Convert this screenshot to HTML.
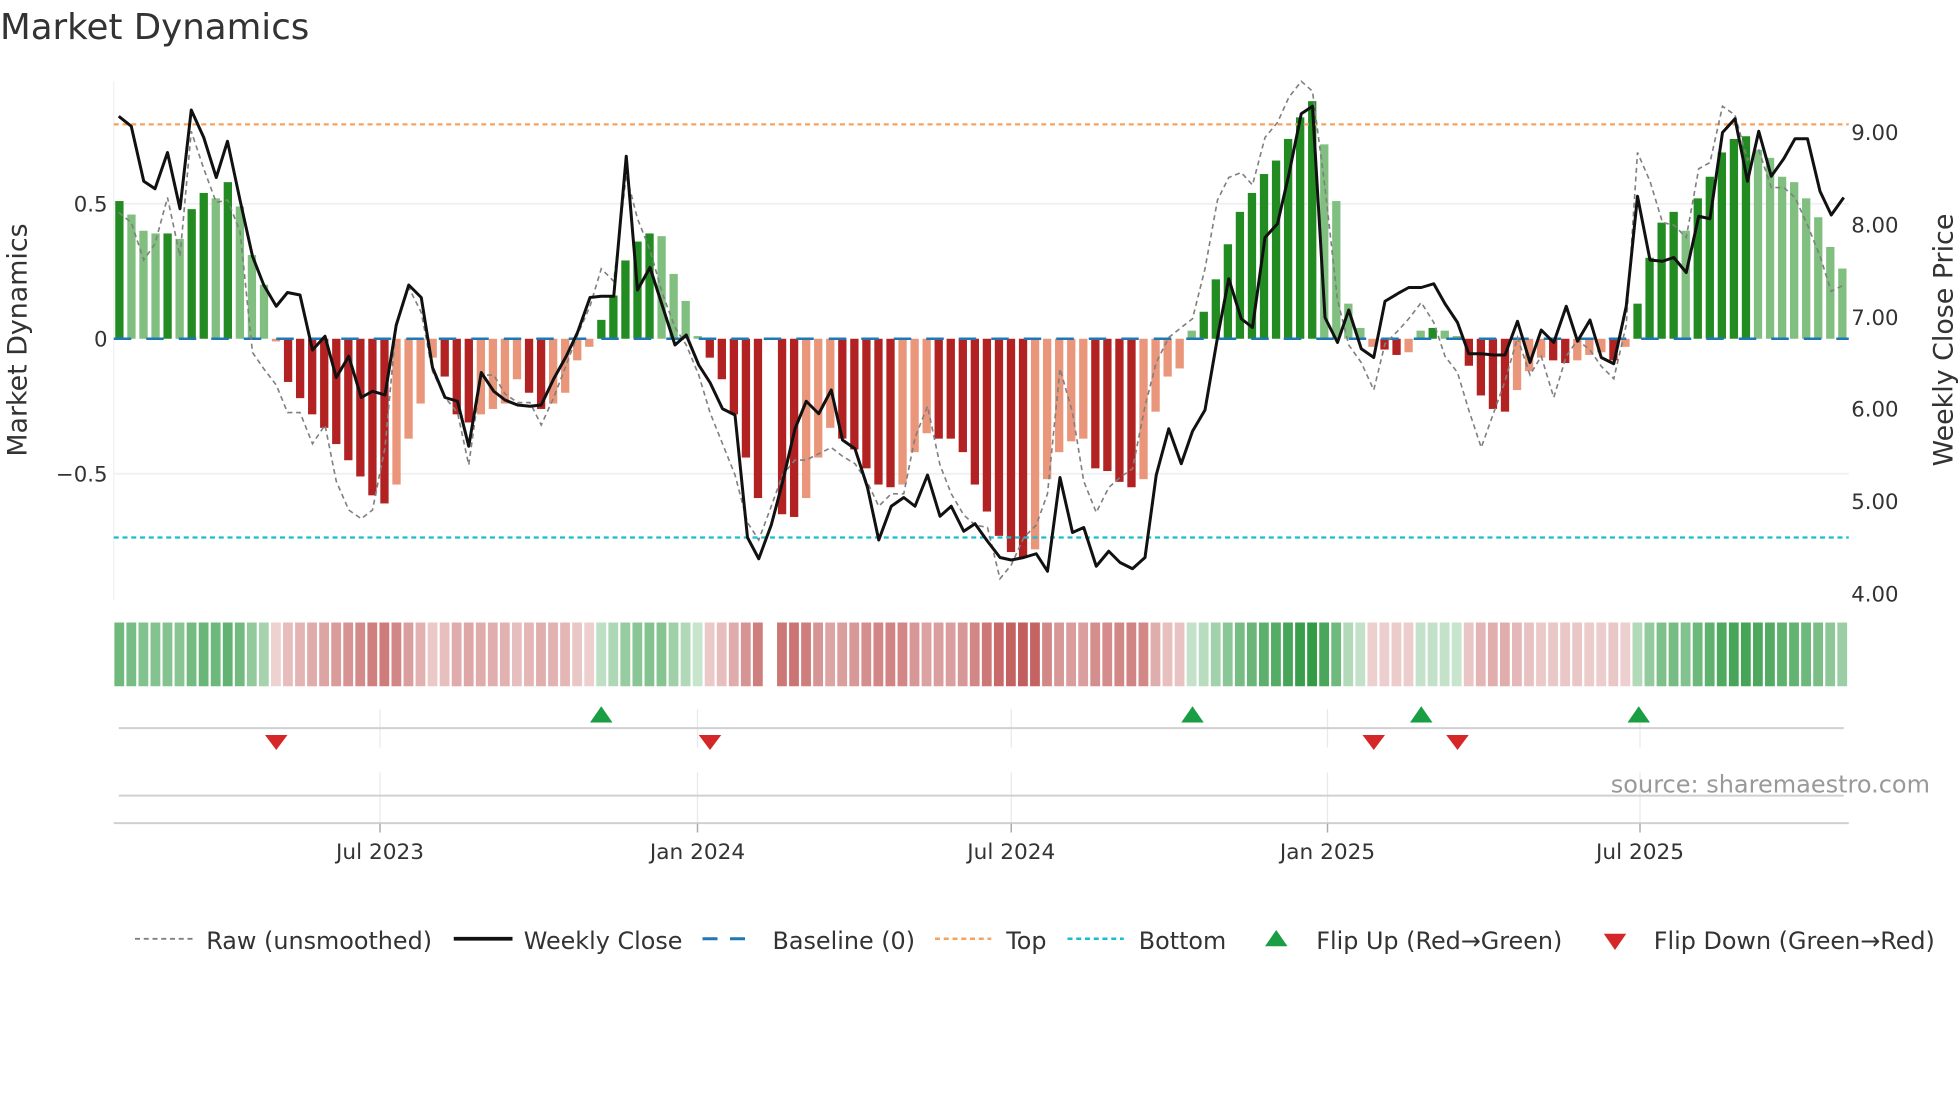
<!DOCTYPE html>
<html><head><meta charset="utf-8"><style>
html,body{margin:0;padding:0;background:#fff;}
svg{display:block;font-family:"DejaVu Sans","Liberation Sans",sans-serif;}
</style></head><body>
<svg id="c" width="1960" height="1102" viewBox="0 0 1568 881.6" xmlns="http://www.w3.org/2000/svg">
<rect width="1568" height="882" fill="#fff"/>
<text x="0" y="31" font-size="28.5" fill="#333">Market Dynamics</text>
<line x1="91" y1="163" x2="1479" y2="163" stroke="#eef0f3" stroke-width="1.5"/>
<line x1="91" y1="379" x2="1479" y2="379" stroke="#eef0f3" stroke-width="1.5"/>
<line x1="91" y1="65" x2="91" y2="480" stroke="#f0f0f0" stroke-width="1"/>
<g id="bars"></g>
<line x1="91" y1="271" x2="1479" y2="271" stroke="#1f77b4" stroke-width="2" stroke-dasharray="14,12"/>
<line x1="91" y1="99.5" x2="1479" y2="99.5" stroke="#f4a460" stroke-width="1.8" stroke-dasharray="4,3"/>
<line x1="91" y1="430" x2="1479" y2="430" stroke="#17becf" stroke-width="1.8" stroke-dasharray="4,3"/>
<polyline id="raw" fill="none" stroke="#808080" stroke-width="1.3" stroke-dasharray="4,3"/>
<polyline id="close" fill="none" stroke="#111" stroke-width="2.4" stroke-linejoin="round"/>
<g font-size="17" fill="#333">
<text x="86" y="169" text-anchor="end">0.5</text>
<text x="86" y="277" text-anchor="end">0</text>
<text x="86" y="385" text-anchor="end">−0.5</text>
<text x="1481" y="112">9.00</text>
<text x="1481" y="186">8.00</text>
<text x="1481" y="260">7.00</text>
<text x="1481" y="333">6.00</text>
<text x="1481" y="407">5.00</text>
<text x="1481" y="481">4.00</text>
</g>
<text transform="translate(21,272) rotate(-90)" font-size="21.5" fill="#333" text-anchor="middle">Market Dynamics</text>
<text transform="translate(1562,272) rotate(-90)" font-size="21.5" fill="#333" text-anchor="middle">Weekly Close Price</text>
<g id="heat"></g>
<g stroke="#e6e9ee" stroke-width="1">
<line x1="304" y1="567" x2="304" y2="598"/><line x1="558" y1="567" x2="558" y2="598"/><line x1="809" y1="567" x2="809" y2="598"/><line x1="1062" y1="567" x2="1062" y2="598"/><line x1="1312" y1="567" x2="1312" y2="598"/>
<line x1="304" y1="618" x2="304" y2="658"/><line x1="558" y1="618" x2="558" y2="658"/><line x1="809" y1="618" x2="809" y2="658"/><line x1="1062" y1="618" x2="1062" y2="658"/><line x1="1312" y1="618" x2="1312" y2="658"/>
</g>
<line x1="95" y1="582.5" x2="1475" y2="582.5" stroke="#d0d0d0" stroke-width="1.6"/>
<line x1="95" y1="636.5" x2="1475" y2="636.5" stroke="#d0d0d0" stroke-width="1.6"/>
<line x1="91" y1="658.5" x2="1479" y2="658.5" stroke="#d0d0d0" stroke-width="1.6"/>
<g stroke="#aaa" stroke-width="1.2">
<line x1="304" y1="659" x2="304" y2="666"/><line x1="558" y1="659" x2="558" y2="666"/><line x1="809" y1="659" x2="809" y2="666"/><line x1="1062" y1="659" x2="1062" y2="666"/><line x1="1312" y1="659" x2="1312" y2="666"/>
</g>
<g id="flips"></g>
<text x="1544" y="634" font-size="19.2" fill="#999" text-anchor="end">source: sharemaestro.com</text>
<g font-size="17.3" fill="#333" text-anchor="middle">
<text x="304" y="687">Jul 2023</text><text x="558" y="687">Jan 2024</text><text x="809" y="687">Jul 2024</text><text x="1062" y="687">Jan 2025</text><text x="1312" y="687">Jul 2025</text>
</g>
<g font-size="19.1" fill="#333">
<line x1="108" y1="751" x2="154" y2="751" stroke="#808080" stroke-width="1.5" stroke-dasharray="4,3"/>
<text x="165" y="759">Raw (unsmoothed)</text>
<line x1="363" y1="751" x2="410" y2="751" stroke="#111" stroke-width="3"/>
<text x="419" y="759">Weekly Close</text>
<line x1="562" y1="751" x2="606" y2="751" stroke="#1f77b4" stroke-width="2.4" stroke-dasharray="12,10"/>
<text x="618" y="759">Baseline (0)</text>
<line x1="748" y1="751" x2="793" y2="751" stroke="#f4a460" stroke-width="2" stroke-dasharray="4,3"/>
<text x="805" y="759">Top</text>
<line x1="854" y1="751" x2="899" y2="751" stroke="#17becf" stroke-width="2" stroke-dasharray="4,3"/>
<text x="911" y="759">Bottom</text>
<polygon points="1021,744 1030,757 1012,757" fill="#1a9e44"/>
<text x="1053" y="759">Flip Up (Red→Green)</text>
<polygon points="1283,747 1301,747 1292,760" fill="#d62728"/>
<text x="1323" y="759">Flip Down (Green→Red)</text>
</g>
</svg>
<script>
var NS="http://www.w3.org/2000/svg";
function el(t,a,p){var e=document.createElementNS(NS,t);for(var k in a)e.setAttribute(k,a[k]);p.appendChild(e);return e;}
var v=[0.51,0.46,0.40,0.39,0.39,0.37,0.48,0.54,0.52,0.58,0.49,0.31,0.20,-0.01,-0.16,-0.22,-0.28,-0.33,-0.39,-0.45,-0.51,-0.58,-0.61,-0.54,-0.37,-0.24,-0.07,-0.14,-0.28,-0.31,-0.28,-0.26,-0.24,-0.15,-0.20,-0.26,-0.24,-0.20,-0.08,-0.03,0.07,0.16,0.29,0.36,0.39,0.38,0.24,0.14,0.01,-0.07,-0.15,-0.28,-0.44,-0.59,null,-0.65,-0.66,-0.59,-0.44,-0.33,-0.37,-0.41,-0.48,-0.54,-0.55,-0.54,-0.42,-0.35,-0.37,-0.37,-0.42,-0.54,-0.64,-0.73,-0.79,-0.81,-0.78,-0.52,-0.42,-0.38,-0.37,-0.48,-0.49,-0.53,-0.55,-0.52,-0.27,-0.14,-0.11,0.03,0.10,0.22,0.35,0.47,0.54,0.61,0.66,0.74,0.82,0.88,0.72,0.51,0.13,0.04,-0.03,-0.04,-0.06,-0.05,0.03,0.04,0.03,0.01,-0.10,-0.21,-0.26,-0.27,-0.19,-0.12,-0.07,-0.08,-0.09,-0.08,-0.06,-0.05,-0.08,-0.03,0.13,0.30,0.43,0.47,0.40,0.52,0.60,0.69,0.74,0.75,0.70,0.67,0.60,0.58,0.52,0.45,0.34,0.26];
var n=v.length, sp=1388/n, bars=document.getElementById('bars'), heat=document.getElementById('heat');
var prev=0;
for(var i=0;i<n;i++){
 var x=91+i*sp; var val=v[i];
 if(val===null){prev=0;continue;}
 var h=val*216, dark=Math.abs(val)>=Math.abs(prev)-0.001;
 var col= val>=0 ? (dark?"#228b22":"#80bf80") : (dark?"#b22222":"#e9967a");
 el('rect',{x:x+1.2,y:val>=0?271-h:271,width:sp-3,height:Math.abs(h),fill:col},bars);
 prev=val;
 var a=0.25+0.7*Math.min(Math.abs(val)/0.85,1);
 var hc= val>=0 ? "rgba(40,150,60,"+a+")" : "rgba(190,80,80,"+a+")";
 el('rect',{x:x+0.5,y:498,width:sp-1.8,height:51,fill:hc},heat);
}
var closeP=[[95,93],[105,101],[115,145],[124,151],[134,122],[144,167],[153,88],[163,110],[173,142],[182,113],[192,160],[202,205],[211,228],[221,245],[230,234],[240,236],[250,280],[260,269],[269,302],[279,285],[289,318],[298,313],[308,316],[317,260],[327,228],[337,238],[346,294],[356,318],[366,321],[375,357],[385,298],[395,313],[404,320],[414,324],[424,325],[433,324],[443,303],[453,285],[462,266],[472,238],[481,237],[491,237],[501,125],[510,232],[520,214],[530,245],[540,276],[549,268],[559,292],[568,306],[578,327],[588,332],[598,430],[607,447],[617,420],[626,386],[636,343],[645,321],[655,331],[665,312],[674,352],[684,359],[694,390],[703,432],[713,405],[723,398],[732,405],[742,380],[752,413],[761,405],[771,425],[780,419],[790,433],[800,446],[809,448],[819,446],[829,443],[838,457],[848,382],[858,426],[867,422],[877,453],[887,441],[896,450],[906,455],[916,446],[925,380],[935,343],[945,371],[954,345],[964,328],[974,270],[983,223],[993,255],[1002,262],[1012,190],[1022,179],[1031,140],[1041,91],[1050,85],[1060,254],[1070,274],[1079,248],[1089,279],[1099,286],[1108,241],[1118,235],[1127,230],[1137,230],[1147,227],[1156,243],[1166,258],[1175,283],[1185,283],[1195,284],[1204,284],[1214,257],[1224,290],[1233,264],[1243,274],[1253,245],[1262,273],[1272,256],[1281,286],[1291,291],[1301,245],[1310,157],[1320,208],[1330,209],[1339,206],[1349,218],[1359,173],[1368,175],[1378,106],[1388,95],[1398,145],[1407,105],[1417,141],[1427,127],[1436,111],[1446,111],[1456,153],[1465,172],[1475,158]];
var rawP=[[95,170],[105,178],[115,208],[124,195],[134,158],[144,205],[153,105],[163,135],[173,162],[182,160],[192,185],[202,282],[211,295],[221,308],[230,330],[240,330],[250,355],[260,340],[269,385],[279,408],[289,415],[298,408],[308,358],[317,260],[327,230],[337,250],[346,297],[356,318],[366,330],[375,372],[385,300],[395,300],[404,315],[414,322],[424,322],[433,340],[443,318],[453,292],[462,268],[472,245],[481,215],[491,225],[501,140],[510,175],[520,200],[530,235],[540,262],[549,276],[559,300],[568,330],[578,355],[588,380],[598,418],[607,432],[617,405],[626,380],[636,368],[645,368],[655,363],[665,358],[674,365],[684,371],[694,386],[703,405],[713,395],[723,395],[732,350],[742,325],[752,372],[761,395],[771,412],[780,420],[790,422],[800,463],[809,452],[819,430],[829,420],[838,395],[848,295],[858,330],[867,385],[877,410],[887,390],[896,382],[906,375],[916,325],[925,290],[935,270],[945,262],[954,255],[964,215],[974,160],[983,142],[993,138],[1002,148],[1012,110],[1022,98],[1031,78],[1041,65],[1050,73],[1060,150],[1070,240],[1079,276],[1089,290],[1099,312],[1108,275],[1118,265],[1127,255],[1137,242],[1147,258],[1156,285],[1166,298],[1175,328],[1185,358],[1195,330],[1204,305],[1214,270],[1224,300],[1233,285],[1243,318],[1253,285],[1262,272],[1272,280],[1281,293],[1291,303],[1301,260],[1310,122],[1320,145],[1330,178],[1339,180],[1349,190],[1359,135],[1368,130],[1378,85],[1388,92],[1398,128],[1407,120],[1417,150],[1427,150],[1436,158],[1446,180],[1456,205],[1465,233],[1475,228]];
document.getElementById('close').setAttribute('points',closeP.map(function(p){return p.join(',')}).join(' '));
document.getElementById('raw').setAttribute('points',rawP.map(function(p){return p.join(',')}).join(' '));
var f=document.getElementById('flips');
[481,954,1137,1311].forEach(function(x){el('polygon',{points:(x)+',565 '+(x+9)+',578 '+(x-9)+',578',fill:'#1a9e44'},f);});
[221,568,1099,1166].forEach(function(x){el('polygon',{points:(x-9)+',588 '+(x+9)+',588 '+x+',600',fill:'#d62728'},f);});
</script>
</body></html>
